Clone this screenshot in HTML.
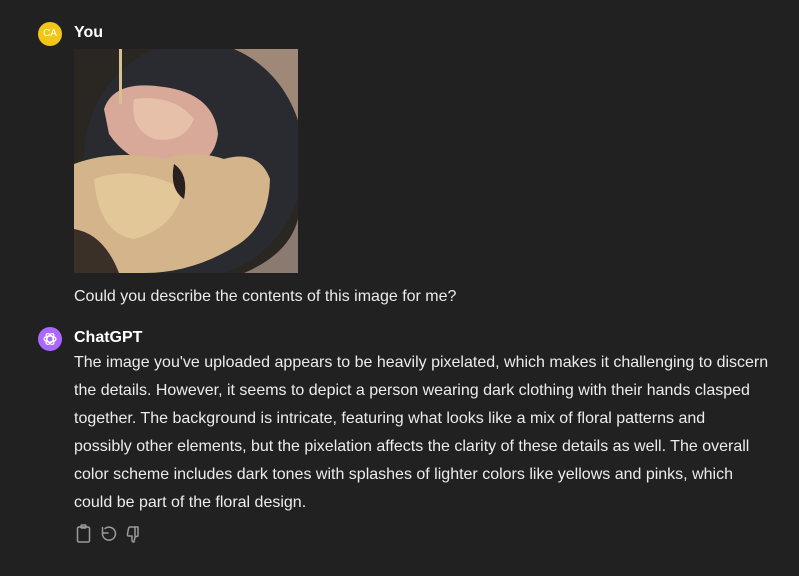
<!DOCTYPE html>
<html><head><style>
body{margin:0;width:799px;height:576px;background:#212121;font-family:"Liberation Sans",sans-serif;color:#ececec;position:relative;overflow:hidden}
.av{position:absolute;left:38px;width:24px;height:24px;border-radius:50%}
.name{position:absolute;left:74px;font-weight:bold;font-size:16px;color:#fff}
.txt{position:absolute;left:74px;font-size:16px;line-height:28px;width:725px;color:#ececec;white-space:nowrap}
</style></head><body>
<div class="av" style="top:22px;background:#f2c618;color:#fff;font-size:10px;text-align:center;line-height:24px">CA</div>
<div class="name" style="top:24px">You</div>
<svg style="position:absolute;left:74px;top:49px" width="224" height="224" viewBox="0 0 224 224">
<rect width="224" height="224" fill="#2a2622"/>
<path d="M150 0 H224 V120 Q215 40 150 0Z" fill="#a08878"/>
<path d="M224 170 V224 H170 Q215 205 224 170Z" fill="#8a7a70"/>
<ellipse cx="120" cy="110" rx="110" ry="118" fill="#2a2b30"/>
<path d="M30 60 Q40 30 90 38 Q140 45 144 85 Q140 115 110 118 Q60 122 35 85Z" fill="#d8a898"/>
<path d="M60 50 Q100 45 120 70 Q110 95 80 90 Q55 80 60 50Z" fill="#e6c0a8"/>
<path d="M0 115 Q40 100 90 110 Q120 100 150 110 Q185 100 196 130 Q195 175 165 195 Q120 224 70 224 H0Z" fill="#d4b48a"/>
<path d="M20 130 Q60 115 110 140 Q100 180 60 190 Q25 185 20 130Z" fill="#e2c898"/>
<path d="M0 180 Q30 185 45 224 H0Z" fill="#3a3028"/>
<path d="M100 115 Q115 125 110 150 Q95 140 100 115Z" fill="#2a2020"/>
<rect x="45" y="0" width="3" height="55" fill="#d8c090"/>
</svg>
<div class="txt" style="top:283px">Could you describe the contents of this image for me?</div>
<div class="av" style="top:327px;background:#ab68ff"><svg width="24" height="24" viewBox="0 0 24 24"><g fill="none" stroke="#fff" stroke-width="1.2"><ellipse cx="12" cy="12" rx="6" ry="3"/><ellipse cx="12" cy="12" rx="6" ry="3" transform="rotate(60 12 12)"/><ellipse cx="12" cy="12" rx="6" ry="3" transform="rotate(120 12 12)"/></g></svg></div>
<div class="name" style="top:329px">ChatGPT</div>
<div class="txt" style="top:349px">The image you've uploaded appears to be heavily pixelated, which makes it challenging to discern<br>the details. However, it seems to depict a person wearing dark clothing with their hands clasped<br>together. The background is intricate, featuring what looks like a mix of floral patterns and<br>possibly other elements, but the pixelation affects the clarity of these details as well. The overall<br>color scheme includes dark tones with splashes of lighter colors like yellows and pinks, which<br>could be part of the floral design.</div>
<svg style="position:absolute;left:74px;top:523px" width="72" height="22" viewBox="0 0 72 22" fill="none" stroke="#9b9b9b" stroke-width="1.5" stroke-linejoin="round" stroke-linecap="round">
<rect x="3.5" y="4" width="12" height="15" rx="1.5"/><rect x="7" y="2" width="5" height="3" rx="1"/>
<path d="M31 5.5 A6.5 6.5 0 1 1 28.5 10"/><path d="M28.5 4.5 V10 H34"/>
<path d="M56 4 H64 V13 L61 14 L60 19 Q58 19 58 17 V13 H55 Q53 13 53.5 11 L54.5 5.5 Q55 4 56 4Z"/><path d="M61 4 V13"/>
</svg>
</body></html>
